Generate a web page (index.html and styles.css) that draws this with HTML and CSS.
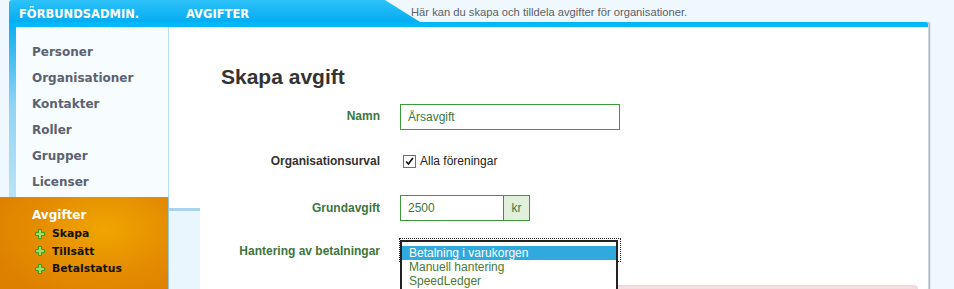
FILE: index.html
```html
<!DOCTYPE html>
<html lang="sv">
<head>
    <meta charset="UTF-8">
    <title>Förbundsadmin - Avgifter</title>
    <link rel="stylesheet" href="styles.css">
</head>
<body>
    <div class="page">
        <!-- Toppen med flikar och beskrivning -->
        <div class="topbar">
            <div class="tabs">
                <span class="brand">FÖRBUNDSADMIN.</span>
                <span class="section">AVGIFTER</span>
            </div>
            <p class="intro">Här kan du skapa och tilldela avgifter för organisationer.</p>
        </div>

        <div class="frame">
            <aside class="side">
                <ul class="menu">
                    <li><a href="#">Personer</a></li>
                    <li><a href="#">Organisationer</a></li>
                    <li><a href="#">Kontakter</a></li>
                    <li><a href="#">Roller</a></li>
                    <li><a href="#">Grupper</a></li>
                    <li><a href="#">Licenser</a></li>
                </ul>
                <!-- Aktiv sektion -->
                <div class="current">
                    <div class="current-title">Avgifter</div>
                    <ul class="submenu">
                        <li><svg class="plus" viewBox="0 0 10 10"><path d="M3.5 0.5h3v3h3v3h-3v3h-3v-3h-3v-3h3z"/></svg><a href="#">Skapa</a></li>
                        <li><svg class="plus" viewBox="0 0 10 10"><path d="M3.5 0.5h3v3h3v3h-3v3h-3v-3h-3v-3h3z"/></svg><a href="#">Tillsätt</a></li>
                        <li><svg class="plus" viewBox="0 0 10 10"><path d="M3.5 0.5h3v3h3v3h-3v3h-3v-3h-3v-3h3z"/></svg><a href="#">Betalstatus</a></li>
                    </ul>
                </div>
            </aside>

            <div class="gutter"></div>

            <main class="content">
                <h1>Skapa avgift</h1>

                <form class="fee-form">
                    <div class="row success">
                        <label for="name">Namn</label>
                        <input type="text" id="name" class="field" value="Årsavgift">
                    </div>

                    <div class="row">
                        <label>Organisationsurval</label>
                        <div class="check">
                            <span class="box"><svg viewBox="0 0 13 13"><path d="M2.5 6.5l2.8 3 5.2-7"/></svg></span>
                            <span>Alla föreningar</span>
                        </div>
                    </div>

                    <div class="row success">
                        <label for="base">Grundavgift</label>
                        <div class="input-group">
                            <input type="text" id="base" class="field short" value="2500">
                            <span class="addon">kr</span>
                        </div>
                    </div>

                    <div class="row success">
                        <label>Hantering av betalningar</label>
                        <div class="select">
                            <div class="dropdown">
                                <div class="option selected">Betalning i varukorgen</div>
                                <div class="option">Manuell hantering</div>
                                <div class="option">SpeedLedger</div>
                            </div>
                        </div>
                    </div>

                    <div class="row">
                        <span></span>
                        <div class="alert"></div>
                    </div>
                </form>
            </main>
        </div>
    </div>
</body>
</html>
```

FILE: styles.css
```css
body {
    margin: 0;
    background-color: #eff8ff;
    font-family: "Liberation Sans", Arial, sans-serif;
    font-size: 12px;
    overflow: hidden;
}
.page {
    padding-left: 9px;
    width: 919px;
}

/* topp */
.topbar {
    display: flex;
    height: 22px;
}
.tabs {
    width: 411px;
    flex: none;
    display: flex;
    align-items: center;
    background: linear-gradient(#2ec2f9, #05acf1);
    clip-path: polygon(0 0, 376px 0, 411px 22px, 0 22px);
    border-top-left-radius: 3px;
    color: white;
    font-family: "DejaVu Sans", Verdana, sans-serif;
    font-weight: bold;
    font-size: 11.5px;
    padding-top: 5px;
    box-sizing: border-box;
}
.brand {
    margin-left: 10px;
    width: 167px;
}
.intro {
    margin: 0 0 0 -9px;
    padding-top: 6px;
    color: #5a5f66;
    font-family: "Liberation Sans", Arial, sans-serif;
    font-size: 11.2px;
    white-space: nowrap;
}

/* ram */
.frame {
    display: flex;
    border-top: 5px solid #00b7f8;
    border-top-right-radius: 2px;
    height: 262px;
    box-shadow: 1px 0 0 #c9d3da, 2px 0 0 #aebbc4, 3px 0 1px #dde6ec;
}

/* sidomeny */
.side {
    width: 160px;
    flex: none;
}
.menu {
    list-style: none;
    margin: 0;
    padding: 12px 0 0 23px;
    width: 160px;
    height: 170px;
    box-sizing: border-box;
    background: linear-gradient(#11aff1, #8fd3f4 45%, #b9e3f7) no-repeat 0 0 / 7px 100%, #f7fcff;
    border-right: 1px solid #b7e0f4;
}
.menu li {
    line-height: 26px;
}
.menu a {
    color: #5b6271;
    text-decoration: none;
    font-family: "DejaVu Sans", Verdana, sans-serif;
    font-weight: bold;
    font-size: 12px;
}
.current {
    margin-left: -9px;
    width: 169px;
    height: 92px;
    padding: 9px 0 0 32px;
    box-sizing: border-box;
    background: radial-gradient(ellipse 70% 80% at 62% 35%, #f0a500, #e48c00 60%, #dd8000);
    border-right: 1px solid #8fc7e4;
    font-family: "DejaVu Sans", Verdana, sans-serif;
    font-weight: bold;
}
.current-title {
    color: white;
    font-size: 12px;
    line-height: 18px;
}
.submenu {
    list-style: none;
    margin: 1px 0 0 3px;
    padding: 0;
}
.submenu li {
    display: flex;
    align-items: center;
    gap: 7px;
    line-height: 17.5px;
}
.submenu a {
    color: #121200;
    text-decoration: none;
    font-size: 10.8px;
}
.plus {
    width: 10px;
    height: 10px;
    fill: #9ee06a;
    stroke: #3c9a1e;
    stroke-width: 1;
}

/* mellanrum */
.gutter {
    width: 31px;
    flex: none;
    background: linear-gradient(#ffffff 181px, #a7d3ec 181px, #a7d3ec 184px, #e9f6fe 184px);
}

/* innehåll */
.content {
    flex: 1;
    background-color: white;
    padding: 38px 10px 0 21px;
}
h1 {
    margin: 0 0 15px;
    font-size: 21px;
    line-height: 24px;
    color: #333;
}
.row {
    display: grid;
    grid-template-columns: 159px 1fr;
    column-gap: 20px;
    margin-bottom: 19px;
}
.row label {
    text-align: right;
    font-weight: bold;
    line-height: 24px;
    color: #333;
}
.success label {
    color: #3c763d;
}
.row:nth-child(2) {
    margin-bottom: 22px;
}
.row:nth-child(3) label {
    line-height: 26px;
}
.row:nth-child(3) {
    margin-bottom: 18px;
}
.row:nth-child(4) {
    margin-bottom: 22px;
}
.field {
    width: 220px;
    height: 26px;
    box-sizing: border-box;
    border: 1px solid #3c9a3d;
    padding: 0 7px;
    font-family: inherit;
    font-size: 12px;
    color: #3c763d;
    outline: none;
}
.field.short {
    width: 103px;
    border-right: 0;
}
.input-group {
    display: flex;
}
.addon {
    width: 27px;
    height: 26px;
    box-sizing: border-box;
    border: 1px solid #3c9a3d;
    background-color: #e1f0da;
    color: #3c763d;
    text-align: center;
    line-height: 24px;
}
.check {
    display: flex;
    align-items: center;
    gap: 4px;
    padding-left: 3px;
    font-size: 12px;
    color: #222;
}
.box {
    width: 11px;
    height: 11px;
    border: 1px solid #707070;
    background: white;
    display: flex;
}
.box svg {
    width: 11px;
    height: 11px;
    fill: none;
    stroke: #111;
    stroke-width: 2;
}

/* öppen lista */
.select {
    position: relative;
    width: 220px;
    height: 22px;
    outline: 1px dotted #222;
}
.dropdown {
    position: absolute;
    left: 0;
    top: 1px;
    width: 218px;
    height: 60px;
    box-sizing: border-box;
    border: 2px solid #222;
    border-bottom: 0;
    background: white;
    padding-top: 4px;
    z-index: 2;
}
.option {
    height: 14px;
    line-height: 14px;
    padding-left: 7px;
    color: #4c7a33;
    font-size: 12px;
}
.option.selected {
    background-color: #30a9de;
    color: white;
}
.alert {
    height: 40px;
    background-color: #f2dede;
    border: 1px solid #eed3d7;
    border-radius: 4px;
}
```
